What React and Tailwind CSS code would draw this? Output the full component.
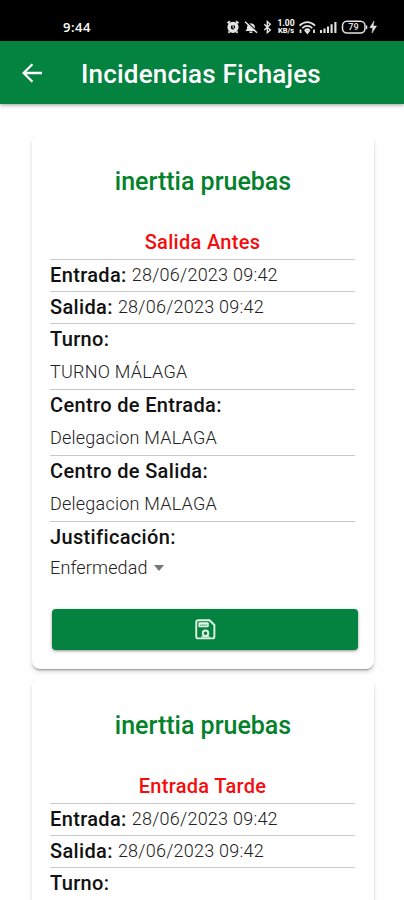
import React from "react";

function StatusIcons() {
  return (
    <svg className="block h-[18px] w-[154px]" viewBox="0 0 154 18" fill="none" stroke="#e4e4e4">
      {/* alarm */}
      <circle cx="8" cy="9.3" r="3.9" strokeWidth="3.4" />
      <path d="M8 7v2.600l1.800 1" strokeWidth="1" />
      <path d="M2.600 5.200 5 3.300M13.400 5.200 11 3.300M4.500 13.500l-1 1.300M11.500 13.500l1 1.300" strokeWidth="2" />
      {/* muted bell */}
      <path d="M20.500 13q1.800-1.500 1.800-5.200a3.900 3.900 0 0 1 7.400 0q0 3.700 1.800 5.200z" fill="#e4e4e4" stroke="none" />
      <path d="M24.300 14.200h3.200" strokeWidth="1.400" />
      <path d="m21 3.200 12 11" stroke="#000" strokeWidth="1.300" />
      <path d="m20 3.800 12 11" strokeWidth="1.500" />
      {/* bluetooth */}
      <path d="m39.300 6.200 6 5.800-3 2.700V3.500l3 2.700-6 5.800" strokeWidth="1.400" />
      {/* wifi */}
      <path d="M74.500 7.600q7.800-7 15.600 0M77.300 10.100q5-4.400 10 0M80 12.300q2.300-2 4.600 0" strokeWidth="1.800" />
      <path d="m82.300 15-1.500-1.800h3zM75.500 11.500V15M89 11.500V15" strokeWidth="1.800" />
      {/* signal */}
      <path d="M96 12v3M99.500 10.500V15M103 8.500V15M106.600 6.300V15M110.400 4v11" strokeWidth="2.100" />
      {/* battery */}
      <rect x="117.500" y="3.300" width="22.500" height="11.800" rx="4.500" strokeWidth="1.500" />
      <path d="M141.600 7.500v3.600" strokeWidth="1.300" />
      {/* charging bolt */}
      <path d="m149 3-4.200 6.700h3l-.8 5.300 4.500-7h-3.400z" fill="#e4e4e4" stroke="#e4e4e4" strokeWidth="0.500" />
    </svg>
  );
}

function StatusBar() {
  return (
    <div className="relative h-[41px] bg-black text-white">
      <span className="absolute left-[63px] top-[19px] text-[13px] leading-4 font-semibold tracking-[0.5px] font-['Open_Sans',sans-serif]">9:44</span>
      <div className="absolute left-[225px] top-[18px]">
        <StatusIcons />
        <div className="absolute left-[51px] top-[1px] w-[20px] text-center text-[8.5px] leading-[8px] font-bold">
          <div>1.00</div>
          <div className="text-[7.5px]">KB/s</div>
        </div>
        <span className="absolute left-[118px] top-[4px] w-[21px] text-center text-[9px] leading-[11px] font-semibold text-[#dddddd]">79</span>
      </div>
    </div>
  );
}

function AppBar() {
  return (
    <header className="relative z-10 flex h-[63px] items-center bg-[#04823f] pl-[22px] text-white shadow-[0_1px_4px_rgba(0,0,0,0.4)]">
      <svg className="h-5 w-5" viewBox="0 0 20 20" fill="none" stroke="white" strokeWidth="2.3">
        <path d="M20 10H2M10.400 1.200 1.600 10l8.800 8.800" />
      </svg>
      <h1 className="ml-[39px] pt-[3px] text-[26px] leading-8 font-medium tracking-[0.2px] whitespace-nowrap">Incidencias Fichajes</h1>
    </header>
  );
}

function Field({ label, value }) {
  return (
    <div className="flex h-8 items-center gap-[5px] border-b border-[#c9c9c9] pb-[2px]">
      <span className="text-[20px] leading-7 font-medium tracking-[0.35px]">{label}</span>
      <span className="pt-px text-[18px] leading-7 font-light tracking-[0.24px] text-[#222]">{value}</span>
    </div>
  );
}

function StackedField({ label, value }) {
  return (
    <div className="h-[66px] border-b border-[#c9c9c9]">
      <div className="text-[20px] leading-[31px] font-medium tracking-[0.35px]">{label}</div>
      <div className="text-[18px] leading-[34px] font-light tracking-[0.22px] text-[#222]">{value}</div>
    </div>
  );
}

function SaveIcon() {
  return (
    <svg className="h-[21px] w-[21px]" viewBox="0 0 22 22" fill="none" stroke="#dff3e3" strokeWidth="2" strokeLinejoin="round">
      <path d="M3.700 1.300h11.600l5 5v12q0 2-2 2H3.300q-2 0-2-2V3.300q0-2 2.400-2z" />
      <path d="M4.400 4.300h9.200v3.400H4.400z" strokeWidth="1.700" />
      <path d="M5 6h8" strokeWidth="1" />
      <circle cx="11" cy="14.900" r="2.900" />
      <path d="M6.500 18.700h9" strokeWidth="1.300" />
    </svg>
  );
}

function IncidentCard({ type }) {
  return (
    <article className="h-[534px] w-[342px] shrink-0 rounded-[8px] bg-white px-[18px] shadow-[0_2px_2px_-1px_rgba(0,0,0,0.35),0_3px_4px_rgba(0,0,0,0.14)]">
      <h2 className="flex h-[92px] items-center justify-center pt-[2px] text-[25px] font-medium text-[#04822b]">inerttia pruebas</h2>
      <div className="w-[305px]">
        <div className="flex h-[33px] items-center justify-center border-b border-[#c9c9c9] pb-[2px] text-[20px] leading-7 font-medium tracking-[0.3px] text-[#f60c0c]">{type}</div>
        <Field label="Entrada:" value="28/06/2023 09:42" />
        <Field label="Salida:" value="28/06/2023 09:42" />
        <StackedField label="Turno:" value="TURNO MÁLAGA" />
        <StackedField label="Centro de Entrada:" value="Delegacion MALAGA" />
        <StackedField label="Centro de Salida:" value="Delegacion MALAGA" />
        <div className="text-[20px] leading-[31px] font-medium tracking-[0.35px]">Justificación:</div>
        <div className="flex items-center gap-[6px] text-[18px] leading-[29px] font-light tracking-[0.15px] text-[#222]">
          Enfermedad
          <span className="h-0 w-0 border-x-[5px] border-t-[6px] border-x-transparent border-t-[#777]" />
        </div>
      </div>
      <button className="mt-[27px] ml-[2px] flex h-[41px] w-[306px] items-center justify-center rounded-[4px] bg-[#04823f] shadow-[0_1px_3px_rgba(0,0,0,0.45)]">
        <SaveIcon />
      </button>
    </article>
  );
}

export default function App() {
  return (
    <div className="flex h-[900px] w-[404px] flex-col overflow-hidden bg-[#fefefe] font-[Roboto,sans-serif] text-[#111]">
      <StatusBar />
      <AppBar />
      <main className="flex min-h-0 flex-1 flex-col gap-[10px] overflow-hidden pt-[31px] pl-8">
        <IncidentCard type="Salida Antes" />
        <IncidentCard type="Entrada Tarde" />
      </main>
    </div>
  );
}
